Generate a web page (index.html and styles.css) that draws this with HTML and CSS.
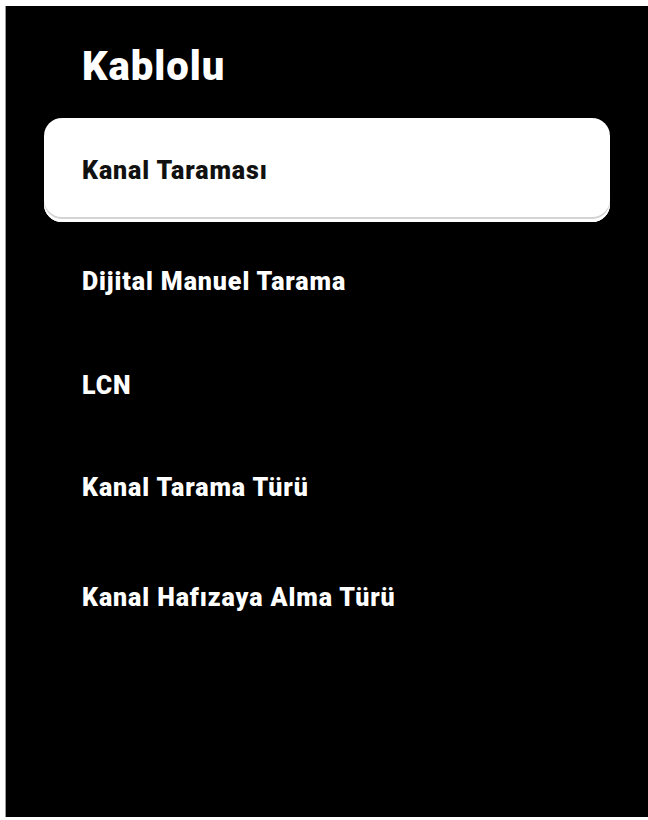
FILE: index.html
```html
<!DOCTYPE html>
<html lang="tr">
<head>
<meta charset="utf-8">
<title>Kablolu</title>
<link rel="stylesheet" href="styles.css">
</head>
<body>
<div class="screen">
  <h1 class="title">Kablolu</h1>
  <ul class="menu">
    <li class="item item-active">Kanal Taraması</li>
    <li class="item item-first">Dijital Manuel Tarama</li>
    <li class="item item-mid">LCN</li>
    <li class="item">Kanal Tarama Türü</li>
    <li class="item item-last">Kanal Hafızaya Alma Türü</li>
  </ul>
</div>
</body>
</html>
```

FILE: styles.css
```css
html, body {
  margin: 0;
  padding: 0;
  background: #ffffff;
}
body {
  width: 648px;
  height: 820px;
  overflow: hidden;
  font-family: Roboto, "Liberation Sans", sans-serif;
}
.screen {
  margin: 6px 0 3px 5px;
  height: 811px;
  background: #000000;
  border-left: 1px solid #9a9a9a;
  box-sizing: border-box;
  padding-top: 39px;
}
.title {
  margin: 0 0 0 76px;
  font-size: 40px;
  line-height: 44px;
  font-weight: 900;
  color: #ffffff;
  letter-spacing: 1px;
}
.menu {
  list-style: none;
  margin: 29px 0 0 0;
  padding: 0;
}
.item {
  height: 102px;
  display: flex;
  align-items: center;
  padding-left: 76px;
  font-size: 25px;
  font-weight: 900;
  color: #ffffff;
  letter-spacing: 0.9px;
}
.item-active {
  height: 104px;
  margin: 0 38px 0 38px;
  padding-left: 38px;
  background: #ffffff;
  color: #111111;
  border-radius: 18px;
  box-shadow: inset 0 -3px 0 #ffffff, inset 0 -5px 0 #d4d4d4;
}
.item-first {
  margin-top: 8px;
}
.item-mid {
  margin-top: 2px;
}
.item-last {
  margin-top: 8px;
}
```
